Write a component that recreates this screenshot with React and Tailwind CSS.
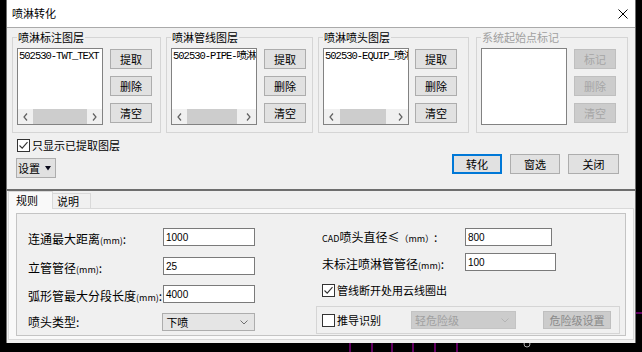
import React from "react";

const FONT = "font-['Noto_Sans_CJK_SC','Noto_Sans',sans-serif]";
const LIST_FONT = "font-['Liberation_Mono','Noto_Sans_CJK_SC',monospace]";
const NUM_FONT = "font-['Liberation_Sans','Noto_Sans_CJK_SC',sans-serif]";

function Btn({ children, disabled = false, className = "" }) {
  return (
    <div
      className={`flex items-center justify-center border text-[11px] leading-none ${
        disabled ? "border-[#bfbfbf] bg-[#cccccc] text-[#a6a6a6]" : "border-[#adadad] bg-[#e1e1e1] text-black"
      } ${className}`}
    >
      {children}
    </div>
  );
}

function Check({ checked = false }) {
  return (
    <span className="flex h-[13px] w-[13px] shrink-0 items-center justify-center border border-[#333333] bg-white">
      {checked && (
        <svg width="11" height="11" viewBox="0 0 11 11">
          <path d="M1.5 5.5 L4.2 8.2 L9.5 2.2" fill="none" stroke="#333333" strokeWidth="1.1" />
        </svg>
      )}
    </span>
  );
}

function Chevron({ dir }) {
  return (
    <svg width="5" height="8" viewBox="0 0 5 8">
      <path
        d={dir === "left" ? "M4 0.5 L1 4 L4 7.5" : "M1 0.5 L4 4 L1 7.5"}
        fill="none"
        stroke="#606060"
        strokeWidth="1.2"
      />
    </svg>
  );
}

function ListBox({ text, thumb, scroll = true }) {
  return (
    <div className="flex h-[77px] w-[86px] shrink-0 flex-col border border-[#828282] bg-white">
      <div className={`flex-1 overflow-hidden whitespace-nowrap pl-[1px] pt-[1px] text-[10.5px] leading-[13px] tracking-[-1px] ${LIST_FONT}`}>
        {text}
      </div>
      {scroll && (
        <div className="flex h-[15px] bg-[#f0f0f0]">
          <div className="flex w-[15px] items-center justify-center">
            <Chevron dir="left" />
          </div>
          <div className="flex flex-1">
            <div className={`h-full bg-[#cdcdcd] ${thumb}`} />
          </div>
          <div className="flex w-[15px] items-center justify-center">
            <Chevron dir="right" />
          </div>
        </div>
      )}
    </div>
  );
}

function Group({ title, text, thumb, disabled = false, className = "", gap = "ml-[7px]" }) {
  return (
    <fieldset className={`border border-[#d5d5d5] pb-[7px] pl-[4px] ${className}`}>
      <legend className={`px-[1px] text-[11px] leading-[14px] ${disabled ? "text-[#a0a0a0]" : "text-black"}`}>{title}</legend>
      <div className="mt-[4px] flex">
        <ListBox text={text} thumb={thumb} scroll={!disabled} />
        <div className={`mt-[1px] flex flex-col gap-[7px] ${gap}`}>
          <Btn disabled={disabled} className="h-[20px] w-[42px]">
            {disabled ? "标记" : "提取"}
          </Btn>
          <Btn disabled={disabled} className="h-[20px] w-[42px]">
            删除
          </Btn>
          <Btn disabled={disabled} className="h-[20px] w-[42px]">
            清空
          </Btn>
        </div>
      </div>
    </fieldset>
  );
}

function Mm({ cn }) {
  return (
    <span className="whitespace-nowrap text-[12px]">
      {cn}
      <span className="text-[9px]">(mm)</span>:
    </span>
  );
}

function Input({ value, className = "" }) {
  return (
    <div className={`flex h-[18px] items-center border border-[#7a7a7a] bg-white pl-[2px] text-[10px] ${NUM_FONT} ${className}`}>
      {value}
    </div>
  );
}

function Select({ value, disabled = false, className = "" }) {
  return (
    <div
      className={`flex items-center justify-between border pl-[3px] pr-[6px] text-[11px] ${
        disabled ? "border-[#c4c4c4] bg-[#cccccc] text-[#a0a0a0]" : "border-[#adadad] bg-[#e5e5e5] text-black"
      } ${className}`}
    >
      <span>{value}</span>
      <svg width="8" height="5" viewBox="0 0 8 5">
        <path d="M0.5 0.5 L4 4 L7.5 0.5" fill="none" stroke={disabled ? "#b4b4b4" : "#707070"} />
      </svg>
    </div>
  );
}

export default function App() {
  return (
    <div className={`flex h-[352px] w-[642px] flex-col overflow-hidden bg-black ${FONT}`}>
      <div className="flex h-[343px]">
        <div className="w-[6px]" />
        <div className="flex w-[630px] flex-col border-x border-[#707070] bg-[#f0f0f0]">
          {/* title bar */}
          <div className="flex h-[28px] shrink-0 items-center justify-between border-b border-[#aaaaaa] bg-white pl-[5px] pr-[7px]">
            <span className="text-[11px] text-black">喷淋转化</span>
            <svg width="10" height="10" viewBox="0 0 10 10">
              <path d="M0.5 0.5 L9.5 9.5 M9.5 0.5 L0.5 9.5" stroke="#000" strokeWidth="1" />
            </svg>
          </div>

          {/* top area */}
          <div className="flex h-[161px] shrink-0 flex-col">
            <div className="flex pl-[5px] pt-[2px]">
              <Group title="喷淋标注图层" text="502530-TWT_TEXT" thumb="w-full" className="w-[149px]" />
              <Group title="喷淋管线图层" text="502530-PIPE-喷淋" thumb="w-[50px]" className="ml-[5px] w-[147px]" />
              <Group
                title="喷淋喷头图层"
                text="502530-EQUIP_喷淋"
                thumb="ml-[1px] w-[46px]"
                className="ml-[5px] w-[151px]"
                gap="ml-[6px]"
              />
              <Group title="系统起始点标记" disabled className="ml-[7px] w-[152px]" />
            </div>
            <div className="flex justify-between pl-[10px] pr-[16px]">
              <div className="flex flex-col">
                <div className="mt-[6px] flex h-[13px] items-center gap-[2px]">
                  <Check checked />
                  <span className="text-[11px] leading-none text-black">只显示已提取图层</span>
                </div>
                <div className="-ml-[1px] mt-[6px] flex h-[20px] w-[40px] items-center gap-[5px] border border-[#adadad] bg-[#e1e1e1] pl-[1px] text-[11px] leading-none">
                  <span>设置</span>
                  <svg width="6" height="5" viewBox="0 0 6 5">
                    <path d="M0 0 L6 0 L3 4.5 Z" fill="#0a0a1a" />
                  </svg>
                </div>
              </div>
              <div className="flex gap-[8px] pt-[21px]">
                <Btn className="h-[20px] w-[50px] border-2 !border-[#0078d7]">转化</Btn>
                <Btn className="h-[20px] w-[50px]">窗选</Btn>
                <Btn className="h-[20px] w-[51px]">关闭</Btn>
              </div>
            </div>
          </div>

          {/* lower panel */}
          <div className="flex flex-1 flex-col border-t-2 border-[#6e6e6e]">
            <div className="flex h-[17px] items-end pl-[1px]">
              <div className="relative z-10 -mb-[1px] flex h-[18px] w-[45px] items-center border-x border-t border-[#d9d9d9] bg-[#f9f9f9] pl-[7px] text-[11px]">
                规则
              </div>
              <div className="flex h-[15px] w-[38px] items-center border-r border-t border-[#d9d9d9] bg-[#f0f0f0] pl-[4px] text-[11px]">
                说明
              </div>
            </div>
            <div className="ml-[1px] mr-[1px] h-[132px] border border-[#d9d9d9] bg-[#f9f9f9] pl-[7px] pt-[4px]">
              <div className="flex h-[123px] w-[610px] border border-[#c4c4c4] bg-[#f0f0f0] pl-[11px] pt-[14px] text-black">
                {/* left column */}
                <div className="flex w-[227px] flex-col">
                  <div className="flex h-[18px] items-center">
                    <div className="w-[135px]">
                      <Mm cn="连通最大距离" />
                    </div>
                    <Input value="1000" className="w-[92px]" />
                  </div>
                  <div className="mt-[11px] flex h-[18px] items-center">
                    <div className="w-[135px]">
                      <Mm cn="立管管径" />
                    </div>
                    <Input value="25" className="w-[92px]" />
                  </div>
                  <div className="mt-[10px] flex h-[18px] items-center">
                    <div className="w-[135px]">
                      <Mm cn="弧形管最大分段长度" />
                    </div>
                    <Input value="4000" className="w-[92px]" />
                  </div>
                  <div className="mt-[10px] flex h-[18px] items-center">
                    <div className="w-[135px] text-[12px]">喷头类型:</div>
                    <Select value="下喷" className="h-[18px] w-[93px]" />
                  </div>
                </div>

                {/* right column */}
                <div className="ml-[61px] flex w-[304px] flex-col">
                  <div className="flex h-[18px] items-center pl-[6px]">
                    <div className="w-[143px] whitespace-nowrap text-[12px]">
                      <span className="text-[9px]">CAD</span>喷头直径≤<span className="text-[9px]">（mm）</span>:
                    </div>
                    <Input value="800" className="w-[87px]" />
                  </div>
                  <div className="mt-[7px] flex h-[18px] items-center pl-[6px]">
                    <div className="w-[143px]">
                      <Mm cn="未标注喷淋管管径" />
                    </div>
                    <Input value="100" className="w-[91px]" />
                  </div>
                  <div className="mt-[13px] flex h-[13px] items-center gap-[2px] pl-[6px]">
                    <Check checked />
                    <span className="text-[11px] leading-none">管线断开处用云线圈出</span>
                  </div>
                  <div className="mt-[9px] flex h-[28px] items-center border border-[#d5d5d5] pl-[5px]">
                    <Check />
                    <span className="ml-[2px] w-[74px] text-[11px] leading-none">推导识别</span>
                    <Select value="轻危险级" disabled className="h-[18px] w-[105px]" />
                    <Btn disabled className="ml-[27px] h-[18px] w-[68px] !text-[#8a8a8a]">
                      危险级设置
                    </Btn>
                  </div>
                </div>
              </div>
            </div>
          </div>
        </div>
        <div className="flex-1">
          <svg width="6" height="343" viewBox="0 0 6 343">
            <path d="M0 313 L6 313" stroke="#c000c0" strokeWidth="1" />
          </svg>
        </div>
      </div>
      <svg width="642" height="9" viewBox="0 0 642 9">
        {[350, 372, 392, 413, 435, 457].map((x) => (
          <path key={x} d={`M${x} 0 L${x} 9`} stroke="#c000c0" strokeWidth="1" />
        ))}
        <circle cx="527" cy="1" r="3" fill="none" stroke="#b0b0b0" strokeWidth="1" />
      </svg>
    </div>
  );
}
